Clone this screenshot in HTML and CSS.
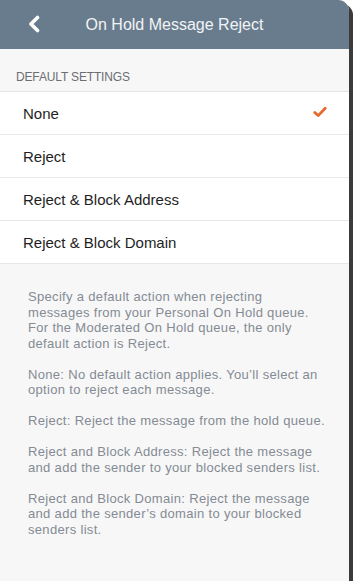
FILE: index.html
```html
<!DOCTYPE html>
<html lang="en">
<head>
<meta charset="utf-8">
<title>On Hold Message Reject</title>
<link rel="stylesheet" href="styles.css">
</head>
<body>
<div class="screen">
  <header class="navbar">
    <button class="back" aria-label="Back">
      <svg width="14" height="18" viewBox="0 0 14 18"><path d="M10.5 2.5 L4 9 L10.5 15.5" fill="none" stroke="#ffffff" stroke-width="3.6" stroke-linecap="round" stroke-linejoin="round"/></svg>
    </button>
    <h1 class="title">On Hold Message Reject</h1>
  </header>
  <div class="section-title">DEFAULT SETTINGS</div>
  <ul class="options">
    <li class="option selected"><span>None</span>
      <svg class="check" width="14" height="12" viewBox="0 0 14 12"><path d="M1.8 6.4 L5.2 9.6 L12.2 2.2" fill="none" stroke="#e8692c" stroke-width="2.8" stroke-linecap="round" stroke-linejoin="round"/></svg>
    </li>
    <li class="option"><span>Reject</span></li>
    <li class="option"><span>Reject &amp; Block Address</span></li>
    <li class="option"><span>Reject &amp; Block Domain</span></li>
  </ul>
  <div class="help">
    <p>Specify a default action when rejecting<br>messages from your Personal On Hold queue.<br>For the Moderated On Hold queue, the only<br>default action is Reject.</p>
    <p>None: No default action applies. You’ll select an<br>option to reject each message.</p>
    <p>Reject: Reject the message from the hold queue.</p>
    <p>Reject and Block Address: Reject the message<br>and add the sender to your blocked senders list.</p>
    <p>Reject and Block Domain: Reject the message<br>and add the sender’s domain to your blocked<br>senders list.</p>
  </div>
</div>
</body>
</html>
```
FILE: styles.css
```css
html, body {
  margin: 0;
  padding: 0;
  background: #ffffff;
}
body {
  font-family: "Liberation Sans", Arial, sans-serif;
}
.screen {
  width: 349px;
  height: 581px;
  background: #f7f7f7;
  border-top-right-radius: 11px;
  box-shadow: 4px 4px 0 #3b3b3b;
  overflow: hidden;
  display: flex;
  flex-direction: column;
}
.navbar {
  height: 49px;
  flex: none;
  background: #687c8d;
  display: flex;
  align-items: center;
  justify-content: center;
  position: relative;
}
.back {
  position: absolute;
  left: 27px;
  top: 15px;
  width: 16px;
  height: 18px;
  padding: 0;
  border: 0;
  background: none;
  display: flex;
}
.title {
  margin: 0;
  font-size: 16px;
  font-weight: normal;
  color: #f2f4f6;
  line-height: 20px;
}
.section-title {
  height: 14px;
  flex: none;
  padding: 21px 16px 7px;
  font-size: 12px;
  letter-spacing: -0.15px;
  line-height: 14px;
  color: #6d6d72;
  border-bottom: 1px solid #e4e4e4;
}
.options {
  list-style: none;
  margin: 0;
  padding: 0;
  background: #ffffff;
}
.option {
  height: 42px;
  padding: 0 22px 0 23px;
  display: flex;
  align-items: center;
  justify-content: space-between;
  font-size: 15px;
  color: #1e1e1e;
  border-bottom: 1px solid #e8e8e8;
}
.check {
  margin-top: -2px;
}
.help {
  padding: 25px 4px 0 28px;
  font-size: 13px;
  letter-spacing: 0.32px;
  line-height: 15.5px;
  color: #848b94;
}
.help p {
  margin: 0 0 15.5px;
}
```
